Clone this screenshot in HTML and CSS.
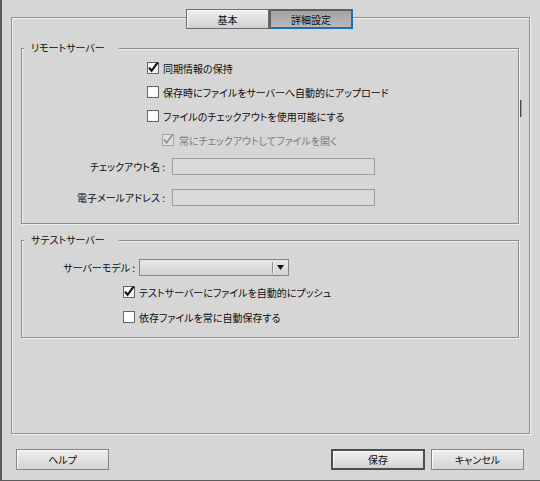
FILE: index.html
```html
<!DOCTYPE html>
<html lang="ja">
<head>
<meta charset="utf-8">
<title>詳細設定</title>
<link rel="stylesheet" href="styles.css">
</head>
<body>
<div class="window">
  <div class="tabs">
    <div class="tab">基本</div>
    <div class="tab tab-active">詳細設定</div>
  </div>
  <div class="panel">
    <div class="group group-remote">
      <div class="group-title">リモートサーバー</div>
      <div class="checks checks-remote">
        <label class="cbrow first">
          <span class="cb"><svg class="tick" viewBox="0 0 12 12" width="12" height="12"><path d="M2 5.6 L4.6 8.8 L10.6 0.6"/></svg></span>
          <span>同期情報の保持</span>
        </label>
        <label class="cbrow">
          <span class="cb"></span>
          <span>保存時にファイルをサーバーへ自動的にアップロード</span>
        </label>
        <label class="cbrow">
          <span class="cb"></span>
          <span>ファイルのチェックアウトを使用可能にする</span>
        </label>
        <label class="cbrow sub disabled">
          <span class="cb"><svg class="tick" viewBox="0 0 12 12" width="12" height="12"><path d="M2 5.6 L4.6 8.8 L10.6 0.6"/></svg></span>
          <span>常にチェックアウトしてファイルを開く</span>
        </label>
      </div>
      <div class="field field-first">
        <span class="flabel">チェックアウト名 :</span>
        <span class="input"></span>
      </div>
      <div class="field field-second">
        <span class="flabel">電子メールアドレス :</span>
        <span class="input"></span>
      </div>
    </div>

    <div class="group group-test">
      <div class="group-title">サテストサーバー</div>
      <div class="select-row">
        <span class="slabel">サーバーモデル :</span>
        <span class="select"><span class="select-value"></span><span class="select-btn"><svg viewBox="0 0 7 5" width="7" height="5"><polygon points="0,0 7,0 3.5,5"/></svg></span></span>
      </div>
      <div class="checks checks-test">
        <label class="cbrow first">
          <span class="cb"><svg class="tick" viewBox="0 0 12 12" width="12" height="12"><path d="M2 5.6 L4.6 8.8 L10.6 0.6"/></svg></span>
          <span>テストサーバーにファイルを自動的にプッシュ</span>
        </label>
        <label class="cbrow second">
          <span class="cb"></span>
          <span>依存ファイルを常に自動保存する</span>
        </label>
      </div>
    </div>
    <span class="grip"></span>
  </div>
  <div class="footer">
    <button class="btn btn-help">ヘルプ</button>
    <span class="spacer"></span>
    <button class="btn btn-save">保存</button>
    <button class="btn btn-cancel">キャンセル</button>
  </div>
</div>
</body>
</html>
```
FILE: styles.css
```css
* { box-sizing: border-box; margin: 0; padding: 0; }
html, body { width: 540px; height: 481px; overflow: hidden; }
body {
  background: #d6d6d6;
  font-family: "Noto Sans CJK JP", "Noto Sans", sans-serif;
  font-size: 10px;
  color: #0c0c0c;
  font-feature-settings: "palt";
}
.window {
  height: 481px;
  border-left: 2px solid #5c5c5c;
  border-bottom: 1px solid #5c5c5c;
  padding-top: 9px;
  display: flex;
  flex-direction: column;
}
.tabs {
  display: flex;
  margin-left: 184px;
  height: 20px;
  position: relative;
  z-index: 1;
}
.tab {
  width: 83px;
  height: 20px;
  display: flex;
  align-items: center;
  justify-content: center;
  border: 1px solid #6c6c6c;
  background: linear-gradient(#f0f0f0, #d0d0d0);
  box-shadow: inset 1px 1px 0 #fafafa;
}
.tab-active {
  width: 84px;
  border: 1px solid #1d6ec8;
  box-shadow: inset 0 0 0 1px #5e5e5e;
  background: linear-gradient(#a2a2a2, #bababa);
}
.panel {
  position: relative;
  margin: -12px 0 0 9px;
  width: 519px;
  height: 417px;
  border: 1px solid #8d8d8d;
  box-shadow: inset 1px 1px 0 #f2f2f2, 1px 1px 0 #f2f2f2;
  padding: 30px 10px 0 9px;
}
.group {
  border: 1px solid #8d8d8d;
  box-shadow: inset 1px 1px 0 #f0f0f0, 1px 1px 0 #f0f0f0;
}
.group-remote { height: 176px; }
.group-test { height: 98px; margin-top: 16px; }
.group-title {
  width: fit-content;
  margin: -9px 0 0 2px;
  padding: 0 14px 0 7px;
  background: #d6d6d6;
  line-height: 16px;
  position: relative;
}
.checks { display: flex; flex-direction: column; }
.checks-remote { padding-left: 125px; margin-top: 0; }
.checks-test { padding-left: 101px; margin-top: 4px; }
.cbrow {
  display: flex;
  align-items: center;
  gap: 4px;
  height: 24px;
}
.checks-test .second { margin-top: 1px; }
.cbrow.sub { padding-left: 15px; gap: 5px; }
.cb {
  position: relative;
  flex: none;
  width: 12px;
  height: 12px;
  border: 1px solid #666;
  background: #fff;
}
.tick {
  position: absolute;
  left: -1px;
  top: -1px;
  overflow: visible;
}
.tick path {
  fill: none;
  stroke: #111;
  stroke-width: 2.2;
  stroke-linejoin: miter;
}
.disabled { color: #7b7b7b; }
.disabled .cb { border-color: #a9a9a9; background: #dedede; }
.disabled .tick path { stroke: #8c8c8c; stroke-width: 1.6; }
.field { display: flex; align-items: center; gap: 7px; height: 17px; }
.field-first { margin-top: 6px; }
.field-second { margin-top: 14px; }
.flabel { width: 143px; text-align: right; }
.input {
  width: 203px;
  height: 17px;
  border: 1px solid #9c9c9c;
  background: #d9d9d9;
}
.select-row { display: flex; align-items: center; gap: 4px; height: 17px; margin-top: 11px; }
.slabel { width: 113px; text-align: right; }
.select {
  display: flex;
  width: 150px;
  height: 17px;
  border: 1px solid #858585;
  background: linear-gradient(#e6e6e6, #d2d2d2);
}
.select-value { flex: 1; }
.select-btn {
  width: 16px;
  display: flex;
  align-items: center;
  justify-content: center;
  border-left: 1px solid #8a8a8a;
  box-shadow: inset 1px 0 0 #f4f4f4;
  margin: 2px 0;
}
.select-btn svg { fill: #111; display: block; }
.grip {
  position: absolute;
  left: 508px;
  top: 82px;
  width: 2px;
  height: 17px;
  border-left: 1px solid #444;
  border-right: 1px solid #a0a0a0;
}
.footer {
  display: flex;
  margin-top: 15px;
  padding: 0 16px 0 14px;
  gap: 6px;
}
.spacer { flex: 1; }
.btn {
  height: 21px;
  font: inherit;
  color: #0c0c0c;
  border: 1px solid #858585;
  background: linear-gradient(#efefef, #d3d3d3);
  box-shadow: inset 1px 1px 0 #fafafa;
  display: flex;
  align-items: center;
  justify-content: center;
}
.btn-help { width: 93px; }
.btn-save { width: 94px; border: 2px solid #4e4e4e; }
.btn-cancel { width: 93px; }
```
